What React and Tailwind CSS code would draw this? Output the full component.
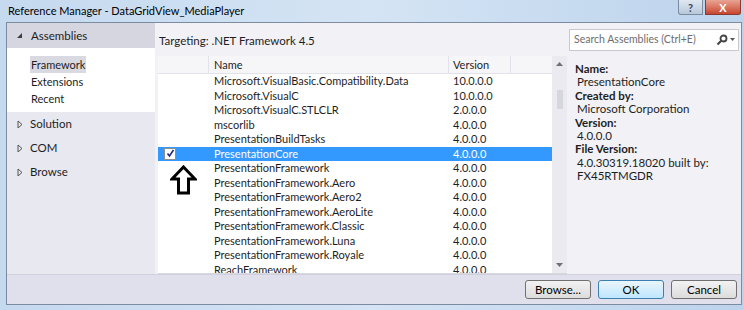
import React from "react";

const rows = [
  ["Microsoft.VisualBasic.Compatibility.Data", "10.0.0.0"],
  ["Microsoft.VisualC", "10.0.0.0"],
  ["Microsoft.VisualC.STLCLR", "2.0.0.0"],
  ["mscorlib", "4.0.0.0"],
  ["PresentationBuildTasks", "4.0.0.0"],
  ["PresentationCore", "4.0.0.0", true],
  ["PresentationFramework", "4.0.0.0"],
  ["PresentationFramework.Aero", "4.0.0.0"],
  ["PresentationFramework.Aero2", "4.0.0.0"],
  ["PresentationFramework.AeroLite", "4.0.0.0"],
  ["PresentationFramework.Classic", "4.0.0.0"],
  ["PresentationFramework.Luna", "4.0.0.0"],
  ["PresentationFramework.Royale", "4.0.0.0"],
  ["ReachFramework", "4.0.0.0"],
];

const Tri = ({ open }) =>
  open ? (
    <svg width="7" height="7" viewBox="0 0 7 7">
      <path d="M6 1 L6 6 L1 6 Z" fill="#3c3c3c" />
    </svg>
  ) : (
    <svg width="6" height="9" viewBox="0 0 6 9">
      <path d="M1 1 L5 4.5 L1 8 Z" fill="none" stroke="#555" />
    </svg>
  );

const Button = ({ children, primary }) => (
  <button
    className={
      "w-[66px] h-[19px] rounded-[3px] border text-[11.5px] leading-none text-black " +
      (primary
        ? "border-[#3c7fb1] bg-gradient-to-b from-[#eaf6fd] to-[#bee6fd]"
        : "border-[#707070] bg-gradient-to-b from-[#f2f2f2] to-[#dcdcdc]")
    }
  >
    {children}
  </button>
);

const Line = ({ bold, children }) => (
  <div className={"h-[13.4px] leading-[13.4px] " + (bold ? "font-bold" : "pl-[2px]")}>
    {children}
  </div>
);

export default function App() {
  return (
    <div
      className="w-[744px] h-[310px] overflow-hidden flex flex-col bg-gradient-to-r from-[#c5d9ef] via-[#d4e4f4] to-[#bcd3ec] text-[11px] text-[#1e1e1e]"
      style={{ fontFamily: 'Lato, "Noto Sans", sans-serif' }}
    >
      {/* title bar */}
      <div className="h-[22px] flex items-start justify-between shrink-0">
        <div className="pl-[8px] pt-[3px] text-black leading-[16px] text-[11px]">
          Reference Manager - DataGridView_MediaPlayer
        </div>
        <div className="flex pr-[3px]">
          <div className="w-[25px] h-[15px] mr-[2px] rounded-bl-[3px] border border-t-0 border-[#7b8ba0] bg-gradient-to-b from-[#dfe8f2] to-[#b8c8da] flex items-center justify-center text-[11px] font-bold text-[#445] leading-none">
            ?
          </div>
          <div className="w-[36px] h-[15px] rounded-br-[3px] border border-t-0 border-[#8a3a30] bg-gradient-to-b from-[#e8a493] to-[#c7432f] flex items-center justify-center text-[11px] font-bold text-white leading-none">
            X
          </div>
        </div>
      </div>

      {/* window body */}
      <div className="flex-1 ml-[6px] mr-[2px] border border-[#7d8ba0] bg-[#e4e5ee] flex flex-col min-h-0">
        <div className="flex flex-1 min-h-0">
          {/* left nav */}
          <div className="w-[148px] shrink-0 bg-[#e7e8f0] flex flex-col">
            <div className="h-[25px] bg-[#d5d6e0] flex items-center pl-[9px] gap-[8px]">
              <Tri open />
              <span className="text-[11.5px]">Assemblies</span>
            </div>
            <div className="bg-white h-[64px] pl-[23px] pt-[8px] flex flex-col items-start">
              <div className="bg-[#d9d9e2] px-[1px] h-[17px] leading-[17px]">Framework</div>
              <div className="px-[1px] h-[17px] leading-[17px]">Extensions</div>
              <div className="px-[1px] h-[17px] leading-[17px]">Recent</div>
            </div>
            {["Solution", "COM", "Browse"].map((t) => (
              <div key={t} className="h-[24px] flex items-center pl-[10px] gap-[7px] text-[11.5px]">
                <Tri />
                <span>{t}</span>
              </div>
            ))}
          </div>

          {/* main */}
          <div className="flex-1 bg-[#f1f1f6] flex flex-col min-w-0">
            <div className="h-[33px] flex items-center justify-between pl-[4px] pr-[2px]">
              <span className="text-[11.5px] pt-[2px]">Targeting: .NET Framework 4.5</span>
              <div className="w-[170px] h-[22px] bg-white border border-[#c6c8d2] flex items-center pl-[4px] pr-[3px] justify-between">
                <span className="text-[#6d6d6d] whitespace-nowrap text-[10.5px]">Search Assemblies (Ctrl+E)</span>
                <span className="flex items-center gap-[2px]">
                  <svg width="12" height="12" viewBox="0 0 12 12">
                    <circle cx="7.5" cy="4.5" r="3" fill="none" stroke="#444" strokeWidth="1.8" />
                    <path d="M5.5 6.5 L1.5 10.5" stroke="#444" strokeWidth="2.2" />
                  </svg>
                  <svg width="5" height="3" viewBox="0 0 5 3">
                    <path d="M0 0 L5 0 L2.5 3 Z" fill="#555" />
                  </svg>
                </span>
              </div>
            </div>

            <div className="flex flex-1 min-h-0">
              {/* grid */}
              <div className="w-[409px] shrink-0 ml-[3px] flex bg-white border-b border-[#d8d8e0] overflow-hidden">
                <div className="w-[394px] flex flex-col">
                  <div className="h-[18px] flex shrink-0 bg-[#f6f6f9] border-b border-[#e2e2ea]">
                    <div className="w-[51px] border-r border-[#e2e2ea]" />
                    <div className="w-[240px] border-r border-[#e2e2ea] pl-[5px] leading-[18px]">Name</div>
                    <div className="w-[62px] border-r border-[#e2e2ea] pl-[4px] leading-[18px]">Version</div>
                    <div className="flex-1" />
                  </div>
                  <div className="relative flex-1">
                    {rows.map(([name, ver, sel]) => (
                      <div
                        key={name}
                        className={
                          "h-[14.5px] leading-[14.5px] flex items-center " +
                          (sel ? "bg-[#3399ff] text-white" : "")
                        }
                      >
                        <div className="w-[51px] pl-[6px] flex items-center">
                          {sel && (
                            <div className="w-[12px] h-[12px] bg-white border border-[#8e8f8f] flex items-center justify-center">
                              <svg width="9" height="9" viewBox="0 0 9 9">
                                <path d="M1.5 4.5 L3.5 7 L7.5 1" fill="none" stroke="#1e2a78" strokeWidth="1.6" />
                              </svg>
                            </div>
                          )}
                        </div>
                        <div className="w-[240px] pl-[5px] whitespace-nowrap overflow-hidden">{name}</div>
                        <div className="w-[62px] pl-[4px]">{ver}</div>
                      </div>
                    ))}
                    <svg
                      className="absolute left-[12px] top-[91px]"
                      width="27"
                      height="30"
                      viewBox="0 0 27 30"
                    >
                      <path
                        d="M13.5 2 L25 14 L18.5 14 L18.5 28 L8.5 28 L8.5 14 L2 14 Z"
                        fill="white"
                        stroke="black"
                        strokeWidth="3"
                      />
                    </svg>
                  </div>
                </div>
                {/* scrollbar */}
                <div className="w-[15px] bg-[#eaeaf0] flex flex-col items-center">
                  <svg className="mt-[6px]" width="7" height="4" viewBox="0 0 7 4">
                    <path d="M0 4 L3.5 0 L7 4 Z" fill="#707070" />
                  </svg>
                  <div className="w-[6px] h-[19px] mt-[24px] bg-[#d6d6de]" />
                  <div className="flex-1" />
                  <svg className="mb-[6px]" width="7" height="4" viewBox="0 0 7 4">
                    <path d="M0 0 L7 0 L3.5 4 Z" fill="#707070" />
                  </svg>
                </div>
              </div>

              {/* details */}
              <div className="flex-1 pl-[8px] pt-[6px] text-[11.5px] text-[#1e1e1e]">
                <Line bold>Name:</Line>
                <Line>PresentationCore</Line>
                <Line bold>Created by:</Line>
                <Line>Microsoft Corporation</Line>
                <Line bold>Version:</Line>
                <Line>4.0.0.0</Line>
                <Line bold>File Version:</Line>
                <Line>4.0.30319.18020 built by:</Line>
                <Line>FX45RTMGDR</Line>
              </div>
            </div>
          </div>
        </div>

        {/* bottom bar */}
        <div className="h-[30px] shrink-0 bg-[#dfe0eb] border-t border-[#d0d1dc] flex items-center justify-end gap-[7px] pr-[4px]">
          <Button>Browse...</Button>
          <Button primary>OK</Button>
          <Button>Cancel</Button>
        </div>
      </div>
      <div className="h-[5px] shrink-0" />
    </div>
  );
}
